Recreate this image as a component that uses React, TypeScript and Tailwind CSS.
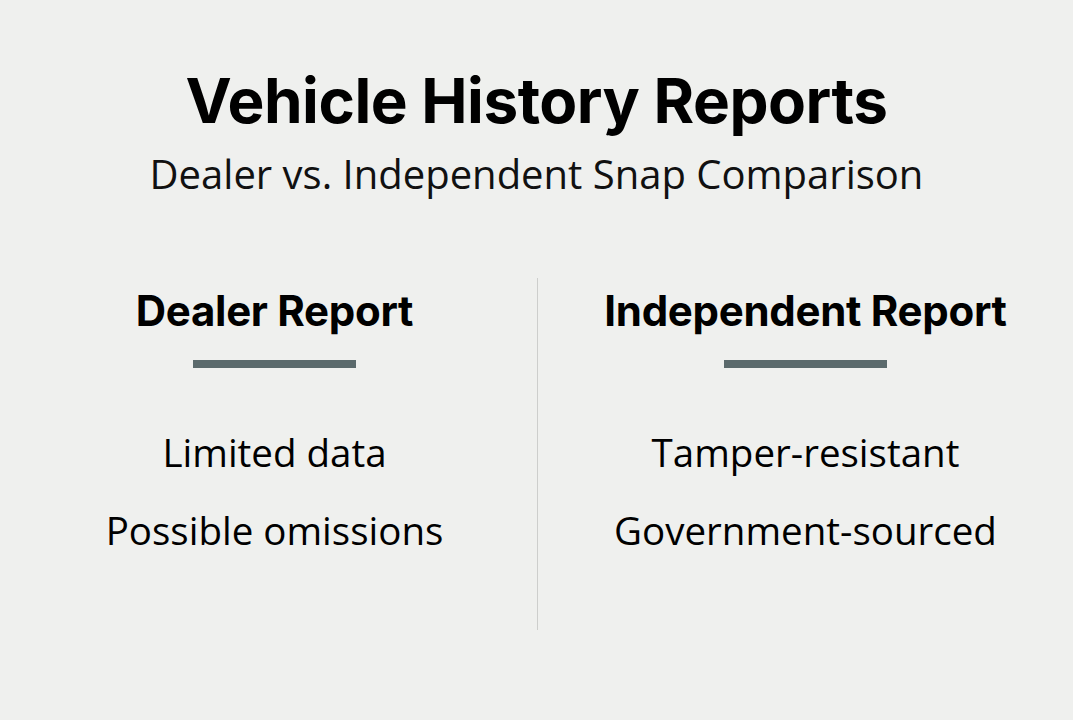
import React from "react";

const columns = [
  { title: "Dealer Report", items: ["Limited data", "Possible omissions"] },
  { title: "Independent Report", items: ["Tamper-resistant", "Government-sourced"] },
];

const Column = ({ title, items }: { title: string; items: string[] }) => {
  return (
    <div className="flex flex-col items-center">
      <h2 className="font-['Inter',sans-serif] text-[42px] font-bold leading-none tracking-[-0.3px] text-black">
        {title}
      </h2>
      <div className="mt-[28px] h-[8px] w-[163px] bg-[#5b6a6c]" />
      <ul className="mt-[64px] flex flex-col items-center gap-[38px] font-['Open_Sans',sans-serif] text-[38.5px] leading-[40px] text-black">
        {items.map((item) => (
          <li key={item}>{item}</li>
        ))}
      </ul>
    </div>
  );
};

const App = () => {
  return (
    <div className="flex h-[720px] w-full flex-col items-center bg-[#eff0ee]">
      <h1 className="mt-[70px] font-['Inter',sans-serif] text-[62px] font-bold leading-none tracking-[-0.5px] text-black">
        Vehicle History Reports
      </h1>
      <p className="mt-[22px] font-['Open_Sans',sans-serif] text-[40px] leading-none text-[#111]">
        Dealer vs. Independent Snap Comparison
      </p>

      <div className="mt-[84px] grid w-full grid-cols-[1fr_1px_1fr] pl-[2px]">
        <div className="pl-[10px] pt-[12px]">
          <Column {...columns[0]} />
        </div>
        <div className="h-[352px] bg-[#cdcecc]" />
        <div className="pt-[12px]">
          <Column {...columns[1]} />
        </div>
      </div>
    </div>
  );
};

export default App;
